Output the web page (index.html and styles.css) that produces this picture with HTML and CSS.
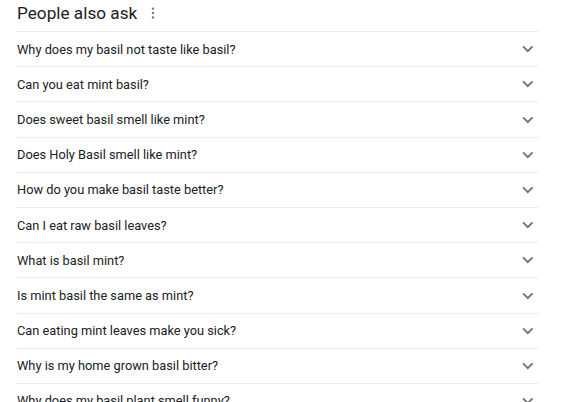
FILE: index.html
```
<!DOCTYPE html>
<html>
<head>
<meta charset="utf-8">
<link rel="stylesheet" href="styles.css">
</head>
<body>
<div class="paa">
  <div class="head">
    <span class="title">People also ask</span>
    <svg class="more" width="4" height="12" viewBox="0 0 4 12"><circle cx="2" cy="1.6" r="1.2"/><circle cx="2" cy="6" r="1.2"/><circle cx="2" cy="10.4" r="1.2"/></svg>
  </div>
  <div class="list">
    <div class="row"><span>Why does my basil not taste like basil?</span><svg class="chev" viewBox="0 0 24 24"><path d="M7.41 8.59 12 13.17l4.59-4.58L18 10l-6 6-6-6z"/></svg></div>
    <div class="row"><span>Can you eat mint basil?</span><svg class="chev" viewBox="0 0 24 24"><path d="M7.41 8.59 12 13.17l4.59-4.58L18 10l-6 6-6-6z"/></svg></div>
    <div class="row"><span>Does sweet basil smell like mint?</span><svg class="chev" viewBox="0 0 24 24"><path d="M7.41 8.59 12 13.17l4.59-4.58L18 10l-6 6-6-6z"/></svg></div>
    <div class="row"><span>Does Holy Basil smell like mint?</span><svg class="chev" viewBox="0 0 24 24"><path d="M7.41 8.59 12 13.17l4.59-4.58L18 10l-6 6-6-6z"/></svg></div>
    <div class="row"><span>How do you make basil taste better?</span><svg class="chev" viewBox="0 0 24 24"><path d="M7.41 8.59 12 13.17l4.59-4.58L18 10l-6 6-6-6z"/></svg></div>
    <div class="row"><span>Can I eat raw basil leaves?</span><svg class="chev" viewBox="0 0 24 24"><path d="M7.41 8.59 12 13.17l4.59-4.58L18 10l-6 6-6-6z"/></svg></div>
    <div class="row"><span>What is basil mint?</span><svg class="chev" viewBox="0 0 24 24"><path d="M7.41 8.59 12 13.17l4.59-4.58L18 10l-6 6-6-6z"/></svg></div>
    <div class="row"><span>Is mint basil the same as mint?</span><svg class="chev" viewBox="0 0 24 24"><path d="M7.41 8.59 12 13.17l4.59-4.58L18 10l-6 6-6-6z"/></svg></div>
    <div class="row"><span>Can eating mint leaves make you sick?</span><svg class="chev" viewBox="0 0 24 24"><path d="M7.41 8.59 12 13.17l4.59-4.58L18 10l-6 6-6-6z"/></svg></div>
    <div class="row"><span>Why is my home grown basil bitter?</span><svg class="chev" viewBox="0 0 24 24"><path d="M7.41 8.59 12 13.17l4.59-4.58L18 10l-6 6-6-6z"/></svg></div>
    <div class="row"><span>Why does my basil plant smell funny?</span><svg class="chev" viewBox="0 0 24 24"><path d="M7.41 8.59 12 13.17l4.59-4.58L18 10l-6 6-6-6z"/></svg></div>
  </div>
</div>
</body>
</html>
```
FILE: styles.css
```
html, body {
  margin: 0;
  padding: 0;
  background: #fff;
  overflow: hidden;
}
.paa {
  width: 521px;
  margin-left: 17px;
  font-family: Roboto, Arial, sans-serif;
  color: #202124;
}
.head {
  height: 31px;
  display: flex;
  align-items: center;
  gap: 14px;
  box-sizing: border-box;
  padding-bottom: 6px;
}
.title {
  font-size: 17.2px;
  line-height: 24px;
}
.more {
  fill: #70757a;
}
.list {
  border-top: 1px solid #e8eaed;
}
.row {
  height: 34.2px;
  border-bottom: 1px solid #e8eaed;
  display: flex;
  align-items: center;
  justify-content: space-between;
  font-size: 12.8px;
}
.chev {
  width: 21.6px;
  height: 21.6px;
  fill: #70757a;
  margin-right: -1px;
}
```
